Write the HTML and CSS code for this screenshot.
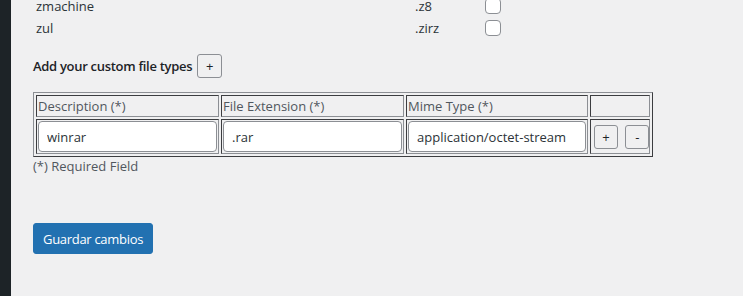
FILE: index.html
```html
<!DOCTYPE html>
<html lang="es">
  <head>
    <meta charset="UTF-8" />
    <meta name="viewport" content="width=device-width, initial-scale=1.0" />
    <title>Tipos de archivo</title>
    <link rel="stylesheet" href="styles.css">
  </head>
  <body>
    <div class="sidebar"></div>
    <div class="content">
      <div class="types">
        <div class="type-row">
          <span class="type-name">zmachine</span>
          <span class="type-ext">.z8</span>
          <input type="checkbox" class="check" />
        </div>
        <div class="type-row">
          <span class="type-name">zul</span>
          <span class="type-ext">.zirz</span>
          <input type="checkbox" class="check" />
        </div>
      </div>

      <div class="custom-title">
        <h3>Add your custom file types</h3>
        <button class="small-btn" type="button">+</button>
      </div>

      <table class="custom-table" border="1">
        <tr>
          <td class="col-desc">Description (*)</td>
          <td class="col-ext">File Extension (*)</td>
          <td class="col-mime">Mime Type (*)</td>
          <td class="col-act"></td>
        </tr>
        <tr>
          <td><input type="text" class="field" value="winrar" /></td>
          <td><input type="text" class="field" value=".rar" /></td>
          <td><input type="text" class="field" value="application/octet-stream" /></td>
          <td class="actions">
            <button class="small-btn" type="button">+</button>
            <button class="small-btn" type="button">-</button>
          </td>
        </tr>
      </table>
      <p class="note">(*) Required Field</p>

      <button class="primary" type="button">Guardar cambios</button>
    </div>
  </body>
</html>
```

FILE: styles.css
```css
body {
  margin: 0;
  height: 296px;
  overflow: hidden;
  display: flex;
  background-color: #f0f0f1;
  color: #3c434a;
  font-family: "Open Sans", "Noto Sans", sans-serif;
  font-size: 13px;
}
.sidebar {
  width: 11px;
  background-color: #1d2327;
}
.content {
  flex: 1;
  padding-left: 22px;
}
.types {
  margin-top: -5px;
}
.type-row {
  display: flex;
  align-items: center;
  height: 22px;
  color: #2c3338;
}
.type-name {
  width: 379px;
  padding-left: 3px;
}
.type-ext {
  width: 70px;
}
.check {
  appearance: none;
  margin: 0;
  width: 16px;
  height: 16px;
  border: 1px solid #8c8f94;
  border-radius: 4px;
  background-color: #fff;
}
.custom-title {
  display: flex;
  align-items: center;
  gap: 5px;
  margin-top: 15px;
}
.custom-title h3 {
  margin: 0;
  font-size: 13px;
  font-weight: 600;
  letter-spacing: -0.3px;
  color: #1d2327;
}
.small-btn {
  width: 25px;
  height: 24px;
  padding: 0;
  border: 1px solid #8c8f94;
  border-radius: 3px;
  background-color: #f0f0f1;
  color: #1d2327;
  font-family: "Open Sans", sans-serif;
  font-size: 13px;
}
.custom-table {
  margin-top: 14px;
  table-layout: fixed;
  width: 620px;
  border-spacing: 2px;
  border-color: #8c8f94;
}
.custom-table td {
  padding: 1px;
  border-color: #8c8f94;
  color: #50575e;
  white-space: nowrap;
  overflow: hidden;
}
.col-desc,
.col-ext {
  width: 179px;
}
.col-mime {
  width: 178px;
}
.col-act {
  width: 56px;
}
.field {
  box-sizing: border-box;
  width: 100%;
  height: 31px;
  margin: 0;
  padding: 0 8px;
  border: 1px solid #8c8f94;
  border-radius: 4px;
  background-color: #fff;
  color: #2c3338;
  font-family: "Open Sans", sans-serif;
  font-size: 13px;
}
.actions {
  text-align: center;
}
.actions .small-btn {
  width: 24px;
  margin: 0 2px;
}
.note {
  margin: 0;
  color: #50575e;
}
.primary {
  margin-top: 48px;
  height: 31px;
  padding: 0 9px;
  border: 1px solid #2271b1;
  border-radius: 3px;
  background-color: #2271b1;
  color: #fff;
  font-family: "Open Sans", sans-serif;
  font-size: 13px;
  letter-spacing: -0.3px;
}
```
